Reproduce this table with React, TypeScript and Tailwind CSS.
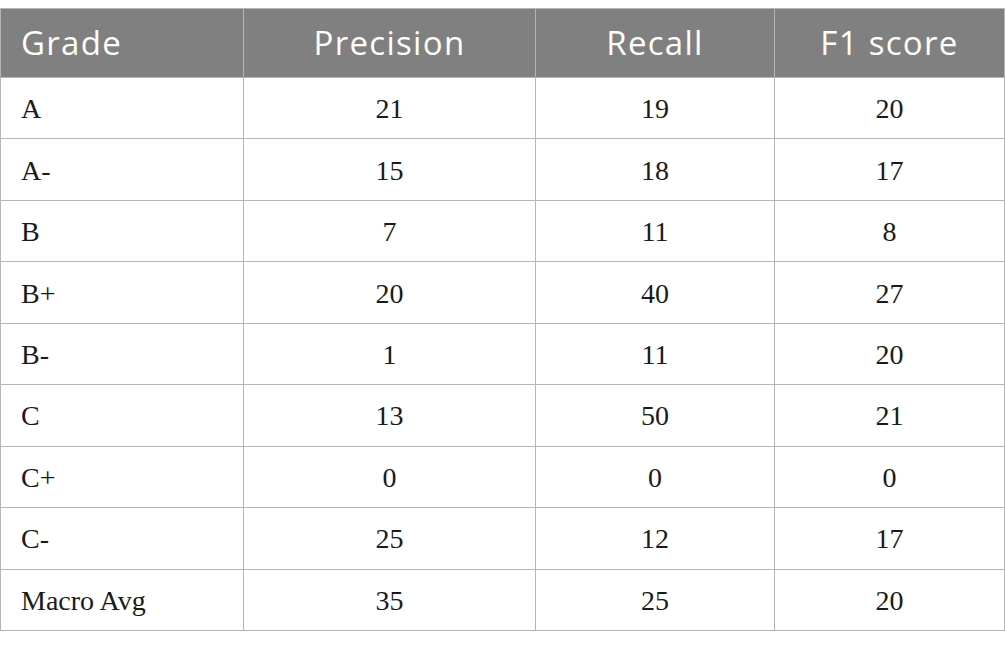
import React from "react";

const rows: [string, string, string, string][] = [
  ["A", "21", "19", "20"],
  ["A-", "15", "18", "17"],
  ["B", "7", "11", "8"],
  ["B+", "20", "40", "27"],
  ["B-", "1", "11", "20"],
  ["C", "13", "50", "21"],
  ["C+", "0", "0", "0"],
  ["C-", "25", "12", "17"],
  ["Macro Avg", "35", "25", "20"],
];

const headers = ["Grade", "Precision", "Recall", "F1 score"];

export default function App() {
  return (
    <div className="w-[1005px] h-[648px] bg-white pt-[8px]">
      <div className="grid grid-cols-[243px_292px_239px_230px] border-t border-l border-[#b5b5b5] w-[1005px]">
        {headers.map((h, i) => (
          <div
            key={h}
            className={`h-[69px] bg-[#7f807f] border-r border-b border-[#b5b5b5] flex items-center text-white text-[33px] font-normal tracking-[1.3px] ${
              i === 0 ? "pl-[20px] justify-start" : "justify-center"
            }`}
            style={{ fontFamily: '"Open Sans", sans-serif' }}
          >
            {h}
          </div>
        ))}
        {rows.map((r) =>
          r.map((c, i) => (
            <div
              key={r[0] + i}
              className={`h-[61.44px] border-r border-b border-[#b5b5b5] flex items-center text-[#1a1a1a] text-[28px] pt-[2px] ${
                i === 0 ? "pl-[20px] justify-start" : "justify-center"
              }`}
              style={{ fontFamily: '"Liberation Serif", serif' }}
            >
              {c}
            </div>
          ))
        )}
      </div>
    </div>
  );
}
